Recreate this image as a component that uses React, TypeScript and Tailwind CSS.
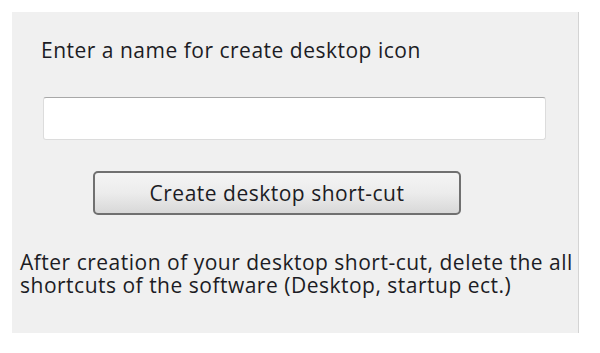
export default function App() {
  return (
    <div className="w-[600px] h-[353px] bg-white pt-3 pl-3 font-['Open_Sans',sans-serif] text-[#1c1c24] tracking-[0.5px]">
      <div className="w-[567px] h-[321px] bg-[#f0f0f0] border-r border-[#d4d4d4] flex flex-col pt-[26px]">
        <p className="ml-[29px] text-[21px] leading-[24px]">Enter a name for create desktop icon</p>

        <input
          type="text"
          className="ml-[31px] mt-[35px] w-[503px] h-[43px] bg-white rounded-[3px] border border-[#dcdcdc] border-t-[#a8a8a8] outline-none"
        />

        <button
          type="button"
          className="ml-[81px] mt-[31px] w-[368px] h-[44px] rounded-[5px] border-2 border-[#707070] bg-gradient-to-b from-[#f4f4f4] via-[#ececec] to-[#d8d8d8] text-[21px] leading-[24px] tracking-[0.5px] text-[#1c1c24]"
        >
          Create desktop short-cut
        </button>

        <p className="ml-[8px] mt-[36px] text-[21px] leading-[23px]">
          After creation of your desktop short-cut, delete the all
          <br />
          shortcuts of the software (Desktop, startup ect.)
        </p>
      </div>
    </div>
  );
}
